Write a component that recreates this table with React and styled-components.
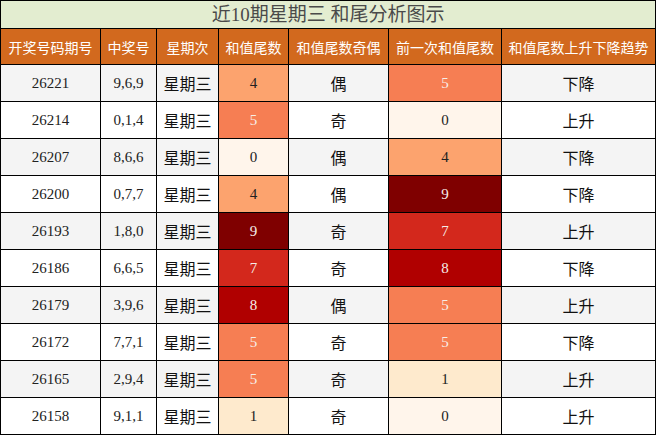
import React from "react";
import styled, { createGlobalStyle } from "styled-components";

const GlobalStyle = createGlobalStyle`
  body {
    margin: 0;
    background: #ffffff;
  }
`;

const rows = [
  { id: "26221", nums: "9,6,9", tail: 4, parity: "偶", prev: 5, trend: "下降" },
  { id: "26214", nums: "0,1,4", tail: 5, parity: "奇", prev: 0, trend: "上升" },
  { id: "26207", nums: "8,6,6", tail: 0, parity: "偶", prev: 4, trend: "下降" },
  { id: "26200", nums: "0,7,7", tail: 4, parity: "偶", prev: 9, trend: "下降" },
  { id: "26193", nums: "1,8,0", tail: 9, parity: "奇", prev: 7, trend: "上升" },
  { id: "26186", nums: "6,6,5", tail: 7, parity: "奇", prev: 8, trend: "下降" },
  { id: "26179", nums: "3,9,6", tail: 8, parity: "偶", prev: 5, trend: "上升" },
  { id: "26172", nums: "7,7,1", tail: 5, parity: "奇", prev: 5, trend: "下降" },
  { id: "26165", nums: "2,9,4", tail: 5, parity: "奇", prev: 1, trend: "上升" },
  { id: "26158", nums: "9,1,1", tail: 1, parity: "奇", prev: 0, trend: "上升" },
];

const heat = {
  0: "#fff5eb",
  1: "#feeacd",
  4: "#fca36e",
  5: "#f67e53",
  7: "#d3281c",
  8: "#b00000",
  9: "#7f0000",
};

const headers = [
  { label: "开奖号码期号", w: 100 },
  { label: "中奖号", w: 56 },
  { label: "星期次", w: 62 },
  { label: "和值尾数", w: 70 },
  { label: "和值尾数奇偶", w: 100 },
  { label: "前一次和值尾数", w: 113 },
  { label: "和值尾数上升下降趋势", w: 154 },
];

const Table = styled.table`
  width: 655px;
  border-collapse: collapse;
  table-layout: fixed;
  font-family: "Liberation Serif", "Noto Sans CJK SC", serif;
  color: #222;
  & td,
  & th {
    border: 1px solid #000;
    padding: 0;
    text-align: center;
  }
`;

const TitleCell = styled.th`
  height: 27px;
  background: #e3edd0;
  color: #4a4a4a;
  font-size: 19px;
  font-weight: normal;
  line-height: 27px;
`;

const HeadCell = styled.th`
  height: 35px;
  background: #d2691e;
  color: #fff;
  font-family: "Noto Sans CJK SC", sans-serif;
  font-size: 14px;
  font-weight: normal;
`;

const Row = styled.tr`
  height: 37px;
  background: ${(p) => (p.$odd ? "#f4f4f4" : "#ffffff")};
`;

const NumCell = styled.td`
  font-size: 15px;
`;

const HanCell = styled.td`
  font-family: "Noto Sans CJK SC", sans-serif;
  font-size: 16px;
  color: #111;
`;

const HeatCell = styled.td`
  font-size: 15px;
  background: ${(p) => heat[p.$v]};
  color: ${(p) => (p.$v >= 5 ? "#f6eee8" : "#222")};
`;

export default function App() {
  return (
    <>
      <GlobalStyle />
      <Table>
        <colgroup>
          {headers.map((h) => (
            <col key={h.label} style={{ width: h.w }} />
          ))}
        </colgroup>
        <thead>
          <tr>
            <TitleCell colSpan={7}>近10期星期三 和尾分析图示</TitleCell>
          </tr>
          <tr>
            {headers.map((h) => (
              <HeadCell key={h.label}>{h.label}</HeadCell>
            ))}
          </tr>
        </thead>
        <tbody>
          {rows.map((r, i) => (
            <Row key={r.id} $odd={i % 2 === 0}>
              <NumCell>{r.id}</NumCell>
              <NumCell>{r.nums}</NumCell>
              <HanCell>星期三</HanCell>
              <HeatCell $v={r.tail}>{r.tail}</HeatCell>
              <HanCell>{r.parity}</HanCell>
              <HeatCell $v={r.prev}>{r.prev}</HeatCell>
              <HanCell>{r.trend}</HanCell>
            </Row>
          ))}
        </tbody>
      </Table>
    </>
  );
}
